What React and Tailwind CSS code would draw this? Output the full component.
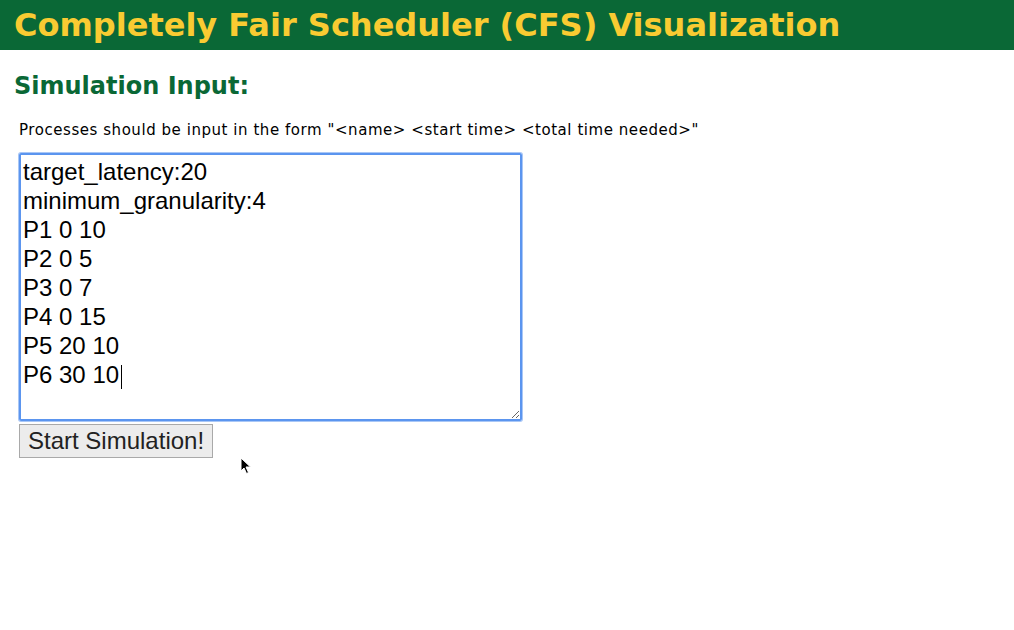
import {useState} from "react";

const initialInput = `target_latency:20
minimum_granularity:4
P1 0 10
P2 0 5
P3 0 7
P4 0 15
P5 20 10
P6 30 10`;

const App = () => {
  const [input, setInput] = useState(initialInput);

  return (
    <div className="relative min-h-[630px] bg-white">
      {/* Header */}
      <div className="h-[50px] bg-[#0a6836] flex items-center px-[14px]">
        <h1 className="text-[#f9cb32] text-[32px] font-bold leading-none font-['DejaVu_Sans',Verdana,sans-serif]">
          Completely Fair Scheduler (CFS) Visualization
        </h1>
      </div>

      <div className="px-[14px]">
        <h2 className="mt-[21px] text-[#0a6836] text-[24px] font-bold leading-[30px] font-['DejaVu_Sans',Verdana,sans-serif]">
          Simulation Input:
        </h2>

        <div className="pl-[5px]">
          <p className="mt-[20px] text-[15px] leading-[18px] text-black font-['DejaVu_Sans',Verdana,sans-serif] tracking-[0.55px]">
            Processes should be input in the form "&lt;name&gt; &lt;start time&gt; &lt;total time needed&gt;"
          </p>

          <div className="relative mt-[14px] w-[503px]">
            <textarea
              value={input}
              onChange={(e) => setInput(e.target.value)}
              spellCheck={false}
              className="block w-[503px] h-[268px] border-2 border-[#5b95ef] rounded-[2px] shadow-[0_0_0_1px_#a9c7f6] outline-none px-[2px] py-[2px] text-[24px] leading-[29px] text-black font-['Liberation_Sans',Arial,sans-serif] resize"
            />
            {/* text caret */}
            <span className="absolute left-[102px] top-[212px] w-px h-[24px] bg-black" />
          </div>

          <button className="mt-[3px] block h-[34px] px-[8px] bg-[#ececec] border border-[#a9a9a9] text-[24px] leading-none text-[#222] font-['Liberation_Sans',Arial,sans-serif]">
            Start Simulation!
          </button>
        </div>
      </div>

      {/* mouse pointer */}
      <svg
        className="absolute left-[240px] top-[457px]"
        width="12"
        height="18"
        viewBox="0 0 12 18"
      >
        <path
          d="M1 1 L1 14 L4 11 L6.5 16.5 L8.5 15.5 L6 10 L10.5 10 Z"
          fill="#000"
          stroke="#fff"
          strokeWidth="1"
          strokeLinejoin="round"
        />
      </svg>
    </div>
  );
};

export default App;
